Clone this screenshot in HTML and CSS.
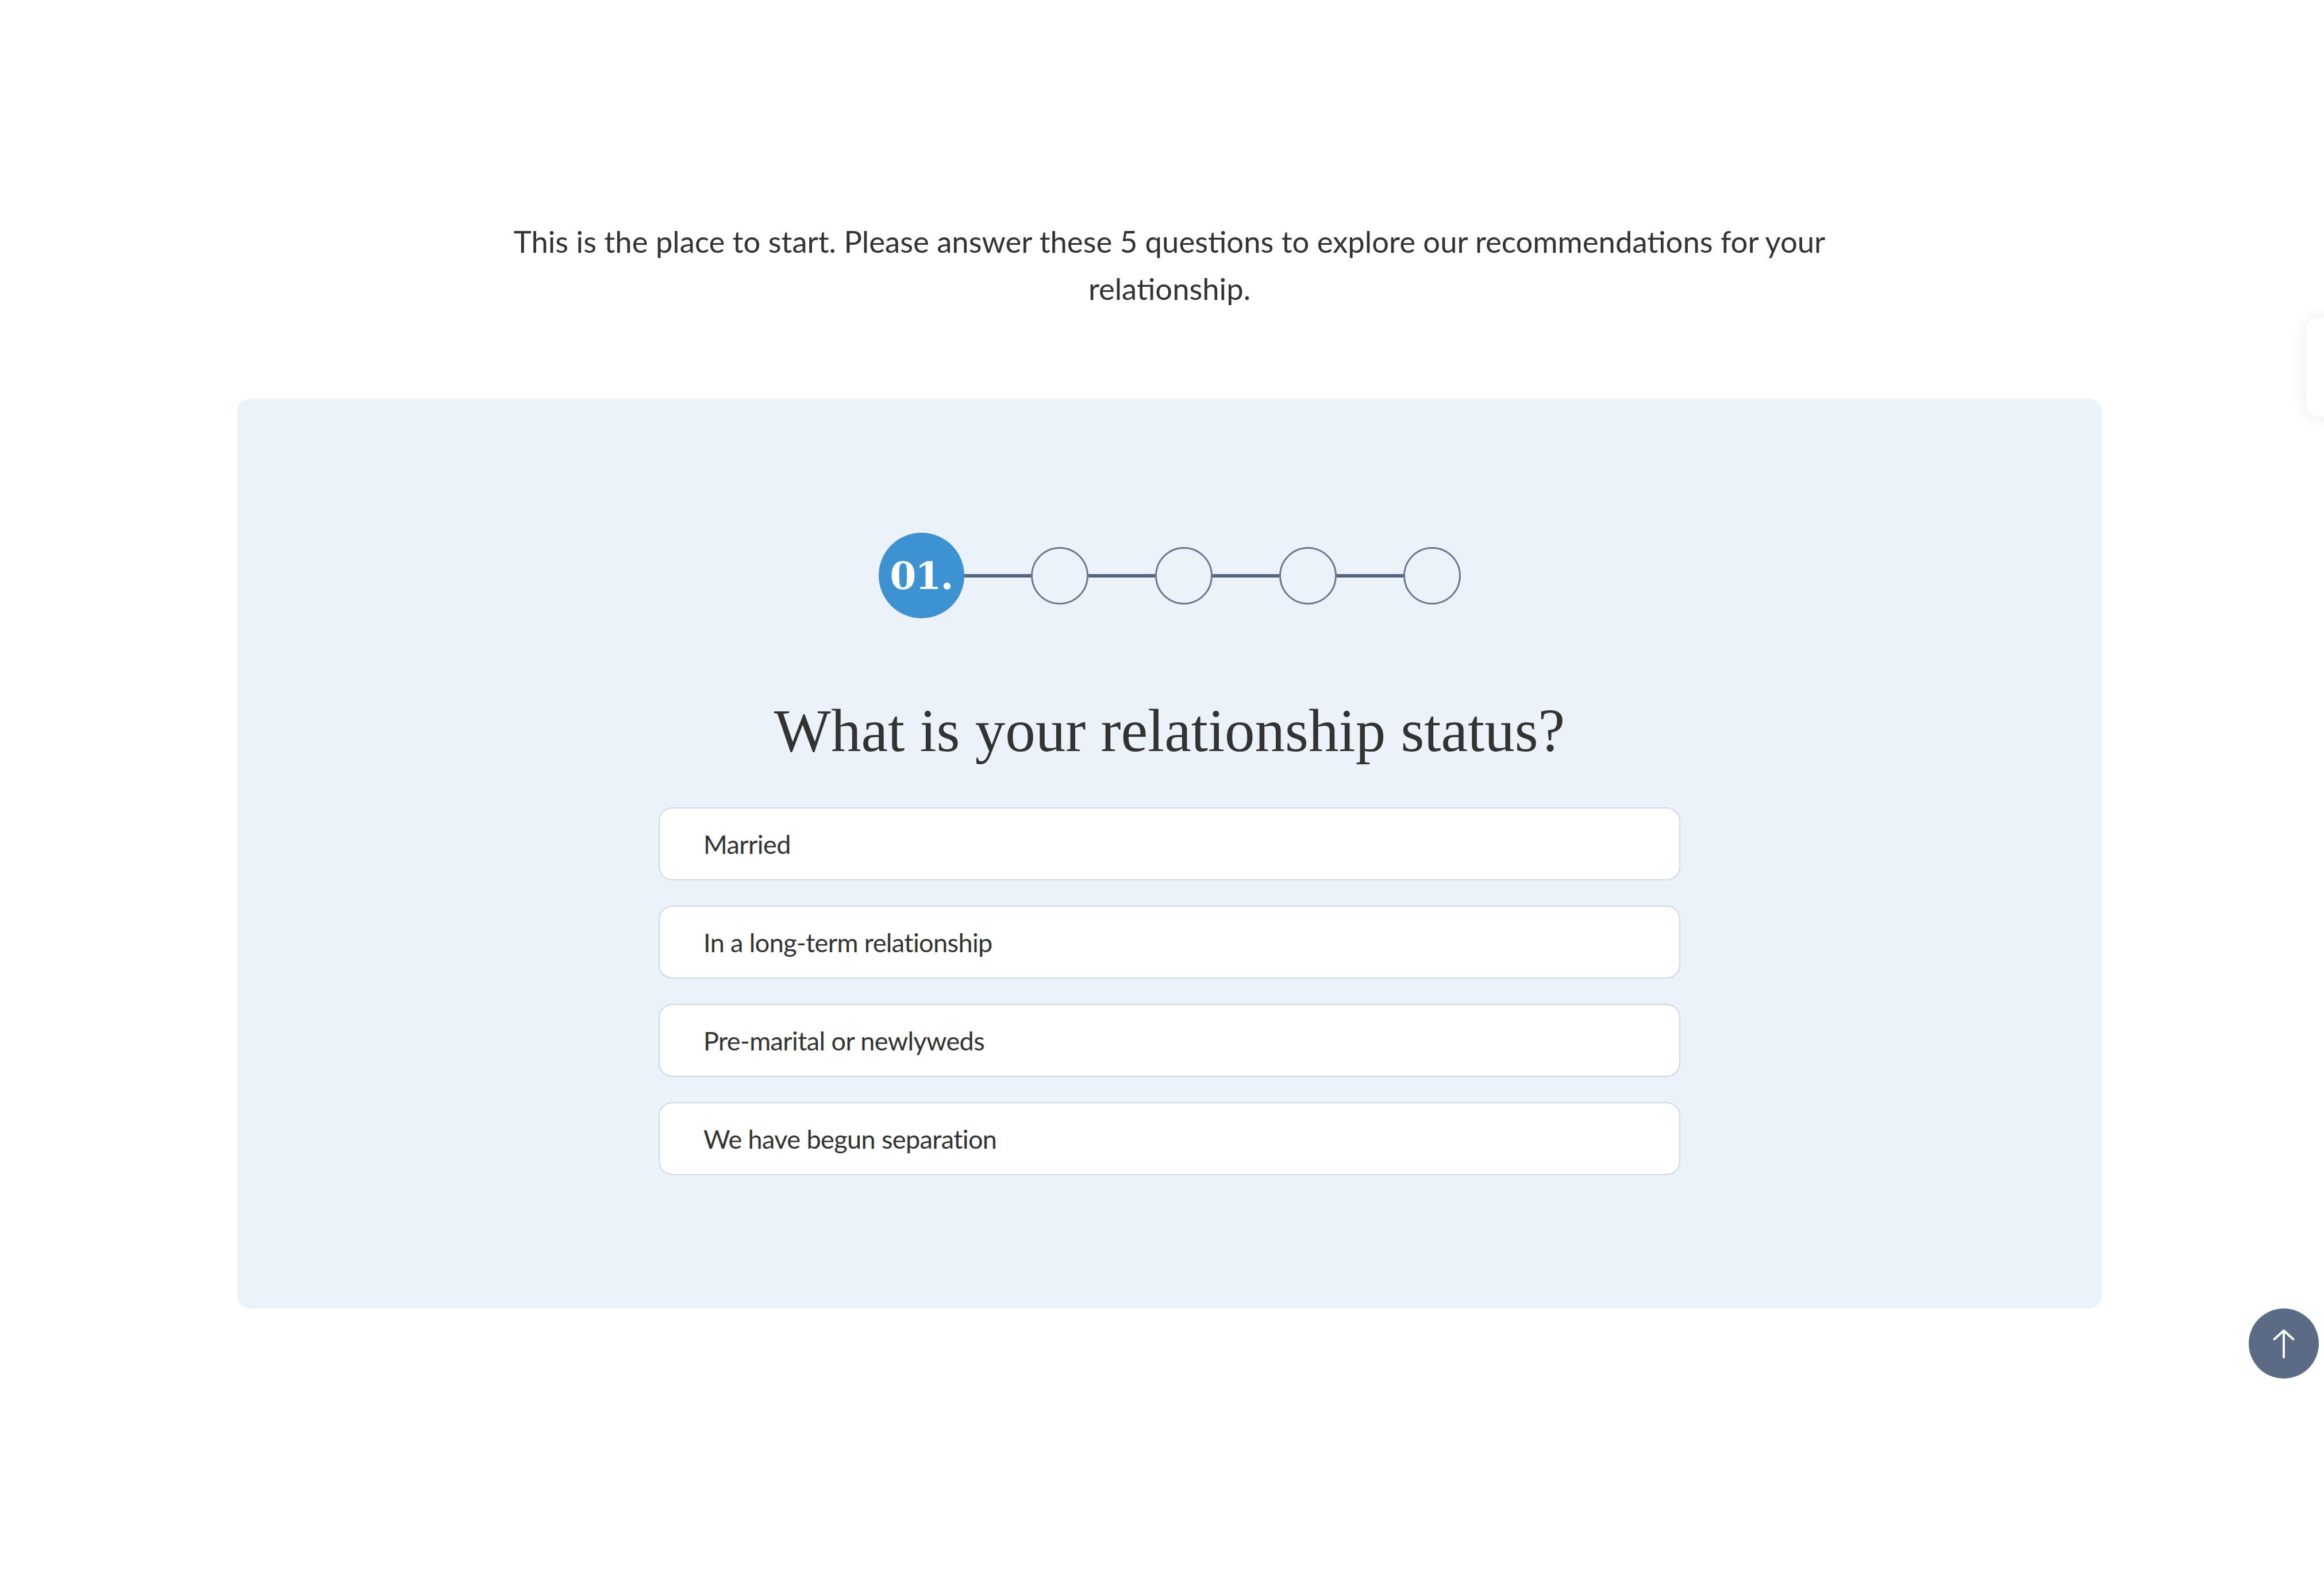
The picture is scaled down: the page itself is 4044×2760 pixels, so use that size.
FILE: index.html
```html
<!DOCTYPE html>
<html lang="en">
<head>
<meta charset="utf-8">
<title>Relationship Quiz</title>
<link rel="stylesheet" href="styles.css">
</head>
<body>
<main class="page">
  <p class="intro">This is the place to start. Please answer these 5 questions to explore our recommendations for your relationship.</p>
  <section class="quiz">
    <div class="stepper">
      <span class="step step-active">01.</span>
      <span class="connector"></span>
      <span class="step"></span>
      <span class="connector"></span>
      <span class="step"></span>
      <span class="connector"></span>
      <span class="step"></span>
      <span class="connector"></span>
      <span class="step"></span>
    </div>
    <h1 class="question">What is your relationship status?</h1>
    <ul class="options">
      <li class="option">Married</li>
      <li class="option">In a long-term relationship</li>
      <li class="option">Pre-marital or newlyweds</li>
      <li class="option">We have begun separation</li>
    </ul>
  </section>
</main>
<div class="side-tab"></div>
<button class="to-top" aria-label="Back to top">
  <svg viewBox="0 0 40 40" width="40" height="40"><path d="M20 36 V6 M9 15 L20 5 L31 15" fill="none" stroke="#fff" stroke-width="2.6" stroke-linecap="round" stroke-linejoin="round"/></svg>
</button>
</body>
</html>
```
FILE: styles.css
```css
html, body {
  margin: 0;
  background: #ffffff;
}
body {
  padding-left: 26px;
  font-family: Lato, "Open Sans", sans-serif;
  color: #333333;
}
.page {
  width: 3244px;
  margin: 0 auto;
}
.intro {
  margin: 379px auto 151px;
  max-width: 2400px;
  text-align: center;
  font-size: 52.6px;
  line-height: 82px;
  color: #333333;
}
.quiz {
  background: #ebf2f9;
  border-radius: 22px;
  padding: 233px 0 232px;
  display: flex;
  flex-direction: column;
  align-items: center;
}
.stepper {
  display: flex;
  align-items: center;
}
.step {
  width: 100px;
  height: 100px;
  box-sizing: border-box;
  border: 3px solid #6b7890;
  border-radius: 50%;
}
.step-active {
  width: 149px;
  height: 149px;
  border: none;
  background: #3d93d1;
  color: #ffffff;
  display: flex;
  align-items: center;
  justify-content: center;
  font-family: "DejaVu Serif", serif;
  font-weight: bold;
  font-size: 66px;
  letter-spacing: -2px;
}
.connector {
  width: 116px;
  height: 6px;
  background: #56657f;
}
.question {
  margin: 133px 0 70px;
  font-family: "Liberation Serif", serif;
  font-weight: normal;
  font-size: 105px;
  line-height: 126px;
  color: #333333;
}
.options {
  list-style: none;
  margin: 0;
  padding: 0;
  width: 1778px;
  display: flex;
  flex-direction: column;
  gap: 44px;
}
.option {
  height: 127px;
  box-sizing: border-box;
  background: #ffffff;
  border: 2px solid #d2d8e1;
  border-radius: 24px;
  display: flex;
  align-items: center;
  padding-left: 76px;
  font-size: 45px;
  letter-spacing: -0.6px;
  color: #333333;
}
.side-tab {
  position: fixed;
  top: 553px;
  left: 4013px;
  width: 80px;
  height: 172px;
  background: #ffffff;
  border-radius: 20px;
  box-shadow: 0 0 30px rgba(0, 0, 0, 0.09);
}
.to-top {
  position: fixed;
  top: 2277px;
  right: 9px;
  width: 122px;
  height: 122px;
  border: none;
  border-radius: 50%;
  background: #5b6b85;
  display: flex;
  align-items: center;
  justify-content: center;
  padding: 0;
}
.to-top svg {
  width: 60px;
  height: 60px;
}
```
